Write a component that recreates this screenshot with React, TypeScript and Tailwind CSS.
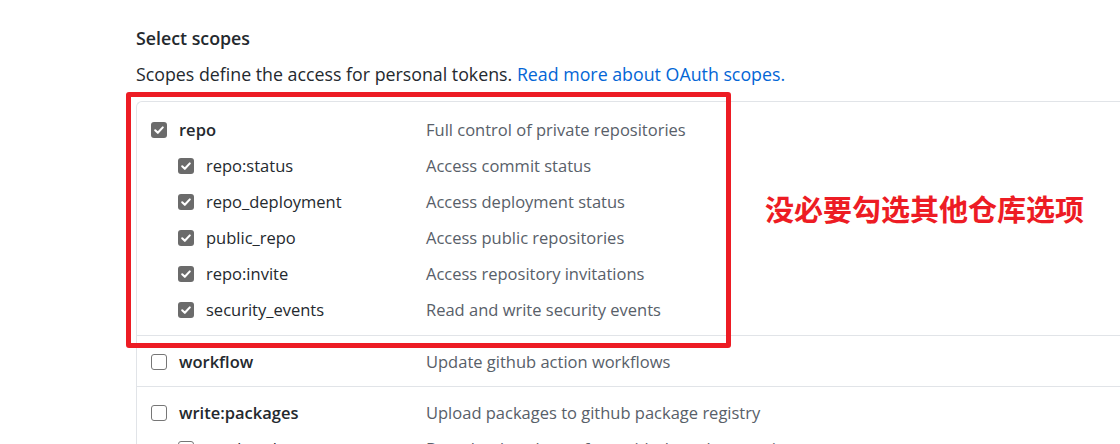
import React from "react";

const Check = ({ checked }: { checked: boolean }) =>
  checked ? (
    <span className="flex h-4 w-4 shrink-0 items-center justify-center rounded-[3px] bg-[#6b6b6b]">
      <svg width="12" height="12" viewBox="0 0 12 12" fill="none">
        <path d="M2.2 6.3 4.8 8.8 9.8 3.4" stroke="#fff" strokeWidth="2.1" strokeLinecap="round" strokeLinejoin="round" />
      </svg>
    </span>
  ) : (
    <span className="block h-4 w-4 shrink-0 rounded-[3px] border border-[#767676] bg-white" />
  );

type Row = { name: string; desc: string; sub?: boolean; checked: boolean; parent?: boolean };

const RowView = ({ r }: { r: Row }) => (
  <div className="flex h-[36px] items-center">
    <div className={`flex w-[289px] shrink-0 items-center gap-[12px] ${r.sub ? "pl-[41px]" : "pl-[14px]"}`}>
      <Check checked={r.checked} />
      <span className={`text-[16.5px] text-[#24292e] ${r.parent ? "font-semibold" : ""}`}>{r.name}</span>
    </div>
    <div className="text-[16.5px] text-[#586069]">{r.desc}</div>
  </div>
);

export default function App() {
  const group1: Row[] = [
    { name: "repo", desc: "Full control of private repositories", checked: true, parent: true },
    { name: "repo:status", desc: "Access commit status", checked: true, sub: true },
    { name: "repo_deployment", desc: "Access deployment status", checked: true, sub: true },
    { name: "public_repo", desc: "Access public repositories", checked: true, sub: true },
    { name: "repo:invite", desc: "Access repository invitations", checked: true, sub: true },
    { name: "security_events", desc: "Read and write security events", checked: true, sub: true },
  ];
  return (
    <div className="relative h-[444px] w-[1120px] overflow-hidden bg-white font-['Open_Sans',sans-serif] leading-6">
      <div className="pl-[136px] pt-[26px]">
        <h3 className="text-[17.8px] font-semibold text-[#24292e]">Select scopes</h3>
        <p className="mt-[12px] text-[17.8px] text-[#24292e]">
          Scopes define the access for personal tokens.{" "}
          <a className="text-[#0366d6]">Read more about OAuth scopes.</a>
        </p>
        <div className="mt-[15px] w-[1200px] rounded-tl-md border-l border-t border-[#e1e4e8]">
          <div className="border-b border-[#e1e4e8] pt-[10px] pb-[7px]">
            {group1.map((r) => (
              <RowView key={r.name} r={r} />
            ))}
          </div>
          <div className="border-b border-[#e1e4e8] pt-[8px] pb-[6px]">
            <RowView r={{ name: "workflow", desc: "Update github action workflows", checked: false, parent: true }} />
          </div>
          <div className="pt-[8px]">
            <RowView r={{ name: "write:packages", desc: "Upload packages to github package registry", checked: false, parent: true }} />
            <RowView r={{ name: "read:packages", desc: "Download packages from github package registry", checked: false, sub: true }} />
          </div>
        </div>
      </div>
      <div className="absolute left-[126px] top-[92px] h-[256px] w-[605px] rounded-[3px] border-[5px] border-[#ed1c24]" />
      <div className="absolute left-[765px] top-[193px] font-['Noto_Sans_CJK_SC',sans-serif] text-[29px] font-bold leading-[30px] text-[#ed1c24]">
        没必要勾选其他仓库选项
      </div>
    </div>
  );
}
